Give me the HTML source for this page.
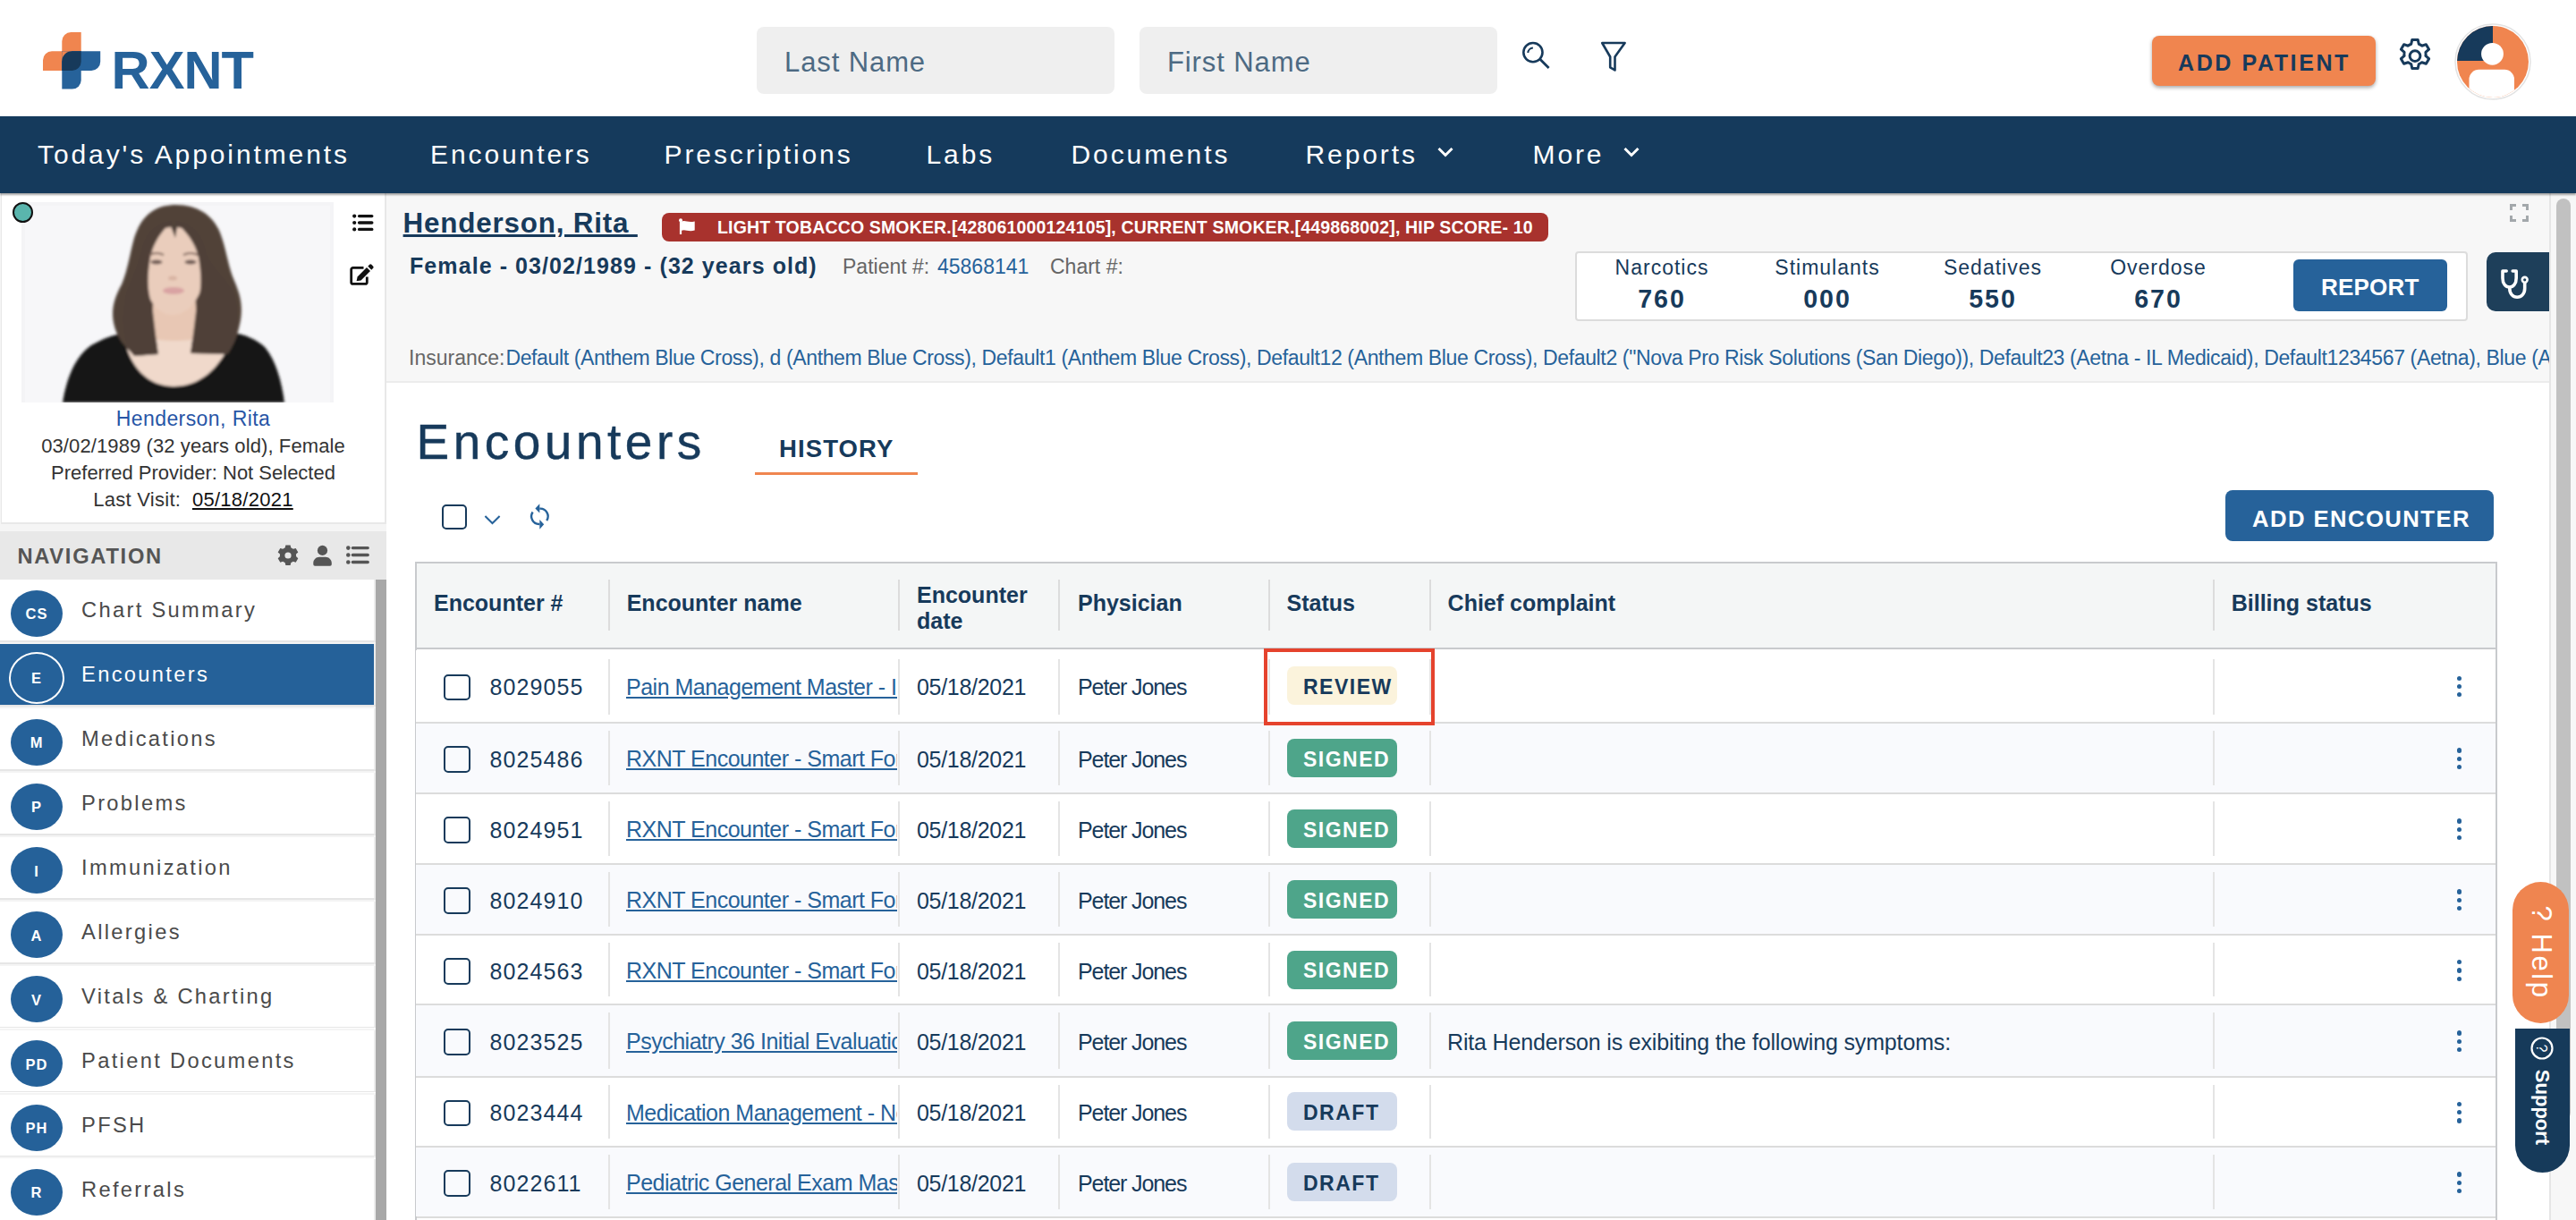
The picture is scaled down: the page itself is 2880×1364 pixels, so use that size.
<!DOCTYPE html><html><head><meta charset="utf-8"><style>
*{margin:0;padding:0;box-sizing:border-box}
html,body{width:2880px;height:1364px;overflow:hidden;background:#fff;font-family:"Liberation Sans",sans-serif}
.t{position:absolute;white-space:nowrap;line-height:1}
.a{position:absolute}
.b{font-weight:bold}
.hd{color:#173a5b}
.bd{color:#173a5b}
</style></head><body>
<div class="a" style="left:0;top:0;width:2880px;height:130px;background:#fff"></div>
<svg class="a" style="left:0;top:0" width="300" height="130" viewBox="0 0 300 130">
<path d="M69.3 46 a10 10 0 0 1 10 -10 h11.4 v43 h-21.4z" fill="#f0854f"/>
<path d="M48 67.3 a10 10 0 0 1 10 -10 h32.7 v21.7 h-42.7z" fill="#f0854f"/>
<path d="M69.3 57.3 h42.9 v11.7 a10 10 0 0 1 -10 10 h-32.9z" fill="#26629a"/>
<path d="M69.3 57.3 h21.4 v32.3 a10 10 0 0 1 -10 10 h-11.4z" fill="#26629a"/>
<rect x="69.3" y="57.3" width="11" height="11" fill="#f0854f"/>
<path d="M80.3 57.3 h10.4 v11.7 a10 10 0 0 1 -10 10 h-11.4 v-10.7 a11 11 0 0 1 11 -11z" fill="#173a5b"/>
</svg>
<div class="t b" style="left:124.5px;top:49.2px;font-size:59.6px;color:#26629a;letter-spacing:-0.9px">RXNT</div>

<div class="a" style="left:846px;top:30px;width:400px;height:75px;background:#efefef;border-radius:8px"></div>
<div class="a" style="left:1274px;top:30px;width:400px;height:75px;background:#efefef;border-radius:8px"></div>
<div class="t " style="left:877px;top:53.7px;font-size:31px;color:#4d6a83;letter-spacing:0.9px">Last Name</div>

<div class="t " style="left:1305px;top:53.7px;font-size:31px;color:#4d6a83;letter-spacing:0.9px">First Name</div>

<svg class="a" style="left:1695px;top:42px" width="45" height="45" viewBox="0 0 45 45">
<circle cx="18.9" cy="16.6" r="10.6" fill="none" stroke="#173a5b" stroke-width="2.6"/>
<path d="M26.8 24.3 L36.6 34.1" stroke="#173a5b" stroke-width="2.8" stroke-linecap="butt"/>
<path d="M13.3 17 A6 6 0 0 1 18.9 11.4" fill="none" stroke="#173a5b" stroke-width="2"/>
</svg>
<svg class="a" style="left:1785px;top:42px" width="40" height="42" viewBox="0 0 40 42">
<path d="M6.2 6 H31.6 L20.5 21.5 V36.4 L15.2 33.3 V21.5 Z" fill="none" stroke="#173a5b" stroke-width="2.6" stroke-linejoin="round"/>
</svg>
<div class="a" style="left:2406px;top:40px;width:250px;height:56px;background:#f0854f;border-radius:8px;box-shadow:0 2px 4px rgba(0,0,0,.35)"></div>
<div class="t b" style="left:2435px;top:57.7px;font-size:25px;color:#173a5b;letter-spacing:2.6px">ADD PATIENT</div>

<svg class="a" style="left:2678px;top:41px" width="44" height="46" viewBox="0 0 44 46">
<g transform="translate(22 21.6) scale(1.07)">
<path d="M-3 -17 h6 l1 4.5 a10 10 0 0 1 3.2 1.85 l4.4 -1.45 l3 5.2 l-3.45 3.05 a10 10 0 0 1 0 3.7 l3.45 3.05 l-3 5.2 l-4.4 -1.45 a10 10 0 0 1 -3.2 1.85 l-1 4.5 h-6 l-1 -4.5 a10 10 0 0 1 -3.2 -1.85 l-4.4 1.45 l-3 -5.2 l3.45 -3.05 a10 10 0 0 1 0 -3.7 l-3.45 -3.05 l3 -5.2 l4.4 1.45 a10 10 0 0 1 3.2 -1.85 z" fill="none" stroke="#173a5b" stroke-width="2.8" stroke-linejoin="round"/>
<circle r="5.5" fill="none" stroke="#173a5b" stroke-width="2.8"/>
</g></svg>
<svg class="a" style="left:2742px;top:24px" width="90" height="90" viewBox="0 0 90 90">
<defs><clipPath id="avc"><circle cx="45" cy="45" r="40"/></clipPath></defs>
<circle cx="45" cy="45" r="42" fill="#fff" stroke="#e2e2e2" stroke-width="1.5"/>
<g clip-path="url(#avc)">
<rect x="0" y="0" width="90" height="90" fill="#f0854f"/>
<path d="M45 0 V38 Q45 44 38 44 H0 V0z" fill="#173a5b"/>
<circle cx="44.5" cy="36.3" r="12.4" fill="#fff"/>
<rect x="18.5" y="53.7" width="50.5" height="40" rx="11" fill="#fff"/>
</g></svg>
<div class="a" style="left:0;top:130px;width:2880px;height:86px;background:#153a5c;box-shadow:0 1.5px 2px rgba(0,0,0,.35);z-index:2"></div>
<div class="t nav" style="left:42.0px;top:157.9px;font-size:30px;color:#fff;z-index:3;letter-spacing:2.9px">Today's Appointments</div>

<div class="t nav" style="left:481.0px;top:157.9px;font-size:30px;color:#fff;z-index:3;letter-spacing:2.9px">Encounters</div>

<div class="t nav" style="left:742.5px;top:157.9px;font-size:30px;color:#fff;z-index:3;letter-spacing:2.9px">Prescriptions</div>

<div class="t nav" style="left:1035.5px;top:157.9px;font-size:30px;color:#fff;z-index:3;letter-spacing:2.9px">Labs</div>

<div class="t nav" style="left:1197.5px;top:157.9px;font-size:30px;color:#fff;z-index:3;letter-spacing:2.9px">Documents</div>

<div class="t nav" style="left:1459.5px;top:157.9px;font-size:30px;color:#fff;z-index:3;letter-spacing:2.9px">Reports</div>

<div class="t nav" style="left:1713.5px;top:157.9px;font-size:30px;color:#fff;z-index:3;letter-spacing:2.9px">More</div>

<svg class="a" style="left:1606px;top:163px;z-index:3" width="20" height="14" viewBox="0 0 20 14"><path d="M2.5 3 L10 10.5 L17.5 3" fill="none" stroke="#fff" stroke-width="3"/></svg>
<svg class="a" style="left:1814px;top:163px;z-index:3" width="20" height="14" viewBox="0 0 20 14"><path d="M2.5 3 L10 10.5 L17.5 3" fill="none" stroke="#fff" stroke-width="3"/></svg>
<div class="a" style="left:0;top:216px;width:432px;height:1148px;background:#f5f5f5"></div>
<div class="a" style="left:1px;top:216px;width:431px;height:370px;background:#fff;border-right:2px solid #e8e8e8;border-bottom:2px solid #e8e8e8;border-left:1px solid #e8e8e8"></div>
<svg class="a" style="left:24px;top:226px" width="349" height="224" viewBox="0 0 349 224">
<defs><filter id="pb" x="-5%" y="-5%" width="110%" height="110%"><feGaussianBlur stdDeviation="1.4"/></filter></defs>
<rect width="349" height="224" fill="#f4f4f6"/>
<rect x="4" y="4" width="341" height="220" fill="#f7f7f9"/>
<g filter="url(#pb)">
<path d="M46 224 C50 198 60 172 78 160 C92 152 104 148 116 146 L236 146 C250 148 262 153 272 162 C284 176 291 200 294 224 Z" fill="#151515"/>
<path d="M114 148 C120 185 142 206 170 206 C198 206 222 188 238 148 C225 138 205 133 170 133 C135 133 125 138 114 148 Z" fill="#f0d9cb"/>
<path d="M173 3 C152 3 135 12 126 40 C121 58 119 75 112 92 C104 106 100 120 103 135 C106 150 114 162 128 172 L153 170 C150 150 148 130 148 100 L194 100 C194 130 192 150 189 169 L230 170 C238 160 242 148 245 132 C248 112 243 100 238 88 C231 72 229 52 222 34 C214 14 196 3 173 3 Z" fill="#514239"/>
<path d="M148 100 L194 100 L197 152 C188 156 156 156 145 152 Z" fill="#e8c7b4"/>
<path d="M137 58 C137 40 150 28 170 28 C190 28 203 40 203 58 L204 86 C200 108 186 126 169 126 C152 126 140 108 138 88 Z" fill="#eacdbc"/>
<path d="M134 56 C138 34 152 22 170 21 C158 30 148 44 144 62 C141 80 140 100 146 114 C148 130 150 150 153 170 L126 172 C114 160 110 130 118 100 C124 86 130 72 134 56 Z" fill="#4f4038"/>
<path d="M206 56 C202 34 188 22 170 21 C182 30 194 44 198 62 C201 80 202 100 196 114 C194 130 192 150 189 169 L230 170 C240 158 244 130 238 104 C232 88 210 72 206 56 Z" fill="#4f4038"/>
<path d="M165 22 C168 28 172 28 175 22 L172 40 Z" fill="#4d4039"/>
<ellipse cx="151" cy="67" rx="6.5" ry="2.6" fill="#6e5a52"/>
<ellipse cx="189" cy="67" rx="6.5" ry="2.6" fill="#6e5a52"/>
<path d="M143 59 Q151 55 159 59" fill="none" stroke="#7a6258" stroke-width="2"/>
<path d="M181 59 Q189 55 197 59" fill="none" stroke="#7a6258" stroke-width="2"/>
<ellipse cx="170" cy="99" rx="12" ry="4" fill="#d9a3a3"/>
<ellipse cx="169" cy="85" rx="5" ry="2.5" fill="#d8b3a2"/>
</g>
</svg>
<div class="a" style="left:14px;top:226px;width:23px;height:23px;border-radius:50%;background:#5ab5ad;border:2px solid #111;z-index:2"></div>
<svg class="a" style="left:392px;top:238px" width="28" height="24" viewBox="0 0 28 24">
<circle cx="4.2" cy="3.6" r="2.1" fill="#111"/><circle cx="4.2" cy="11" r="2.1" fill="#111"/><circle cx="4.2" cy="18.4" r="2.1" fill="#111"/>
<path d="M9.6 3.6 H23.8 M9.6 11 H23.8 M9.6 18.4 H23.8" stroke="#111" stroke-width="3.4" stroke-linecap="round"/>
</svg>
<svg class="a" style="left:389px;top:293px" width="32" height="30" viewBox="0 0 32 30">
<path d="M17.5 6.4 H5.7 a2 2 0 0 0 -2 2 V22.4 a2 2 0 0 0 2 2 H19.3 a2 2 0 0 0 2 -2 V16.5" fill="none" stroke="#111" stroke-width="2.8"/>
<path d="M9.6 21.3 L10.6 16.4 L21 6 L25 10 L14.6 20.4 Z" fill="#111"/>
<path d="M22.3 4.7 L24.2 2.8 a1.5 1.5 0 0 1 2.1 0 L28.2 4.7 a1.5 1.5 0 0 1 0 2.1 L26.3 8.7 Z" fill="#111"/>
</svg>
<div class="t " style="left:216px;top:456.8px;font-size:23px;color:#2755a6;transform:translateX(-50%);letter-spacing:0.43px">Henderson, Rita</div>

<div class="t " style="left:216px;top:488.3px;font-size:22px;color:#333;transform:translateX(-50%);letter-spacing:0.1px">03/02/1989 (32 years old), Female</div>

<div class="t " style="left:216px;top:518.1px;font-size:22px;color:#333;transform:translateX(-50%)">Preferred Provider: Not Selected</div>

<div class="t " style="left:216px;top:547.8px;font-size:22px;color:#333;transform:translateX(-50%);letter-spacing:0.27px">Last Visit:&nbsp; <span style="text-decoration:underline;color:#111">05/18/2021</span></div>

<div class="a" style="left:0;top:594px;width:432px;height:54px;background:#e8e8e8"></div>
<div class="t b" style="left:19.4px;top:610.8px;font-size:23.7px;color:#555;letter-spacing:1.73px">NAVIGATION</div>

<svg class="a" style="left:309px;top:608px" width="26" height="26" viewBox="0 0 26 26"><g transform="translate(13 13)">
<path d="M-2.6 -11.5 h5.2 l0.8 3 a8 8 0 0 1 2.3 1.3 l3 -0.9 l2.6 4.5 l-2.3 2.1 a8 8 0 0 1 0 2.6 l2.3 2.1 l-2.6 4.5 l-3 -0.9 a8 8 0 0 1 -2.3 1.3 l-0.8 3 h-5.2 l-0.8 -3 a8 8 0 0 1 -2.3 -1.3 l-3 0.9 l-2.6 -4.5 l2.3 -2.1 a8 8 0 0 1 0 -2.6 l-2.3 -2.1 l2.6 -4.5 l3 0.9 a8 8 0 0 1 2.3 -1.3 z" fill="#555"/>
<circle r="3.6" fill="#e8e8e8"/></g></svg>
<svg class="a" style="left:349px;top:608px" width="24" height="26" viewBox="0 0 24 26">
<circle cx="11.5" cy="7.4" r="5.6" fill="#555"/><path d="M1.3 23 V21.5 C1.3 17.5 4.5 14.7 8 14.7 H15 C18.5 14.7 21.8 17.5 21.8 21.5 V23 a1.8 1.8 0 0 1 -1.8 1.8 H3.1 a1.8 1.8 0 0 1 -1.8 -1.8 Z" fill="#555"/></svg>
<svg class="a" style="left:386px;top:608px" width="28" height="26" viewBox="0 0 28 26">
<circle cx="3.3" cy="4.6" r="2.3" fill="#555"/><circle cx="3.3" cy="12.5" r="2.3" fill="#555"/><circle cx="3.3" cy="20.5" r="2.3" fill="#555"/>
<path d="M8.4 4.6 H25.2 M8.4 12.5 H25.2 M8.4 20.5 H25.2" stroke="#555" stroke-width="3.4" stroke-linecap="round"/></svg>
<div class="a" style="left:0;top:648px;width:420px;height:716px;background:#fff"></div>
<div class="a" style="left:0;top:716.0px;width:420px;height:1.8px;background:#e6e6e6"></div>
<div class="a" style="left:0;top:717.8px;width:420px;height:2px;background:#f4f4f4"></div>
<div class="a" style="left:418px;top:648.0px;width:2px;height:68px;background:#ececec"></div>
<div class="a" style="left:11.7px;top:659.6px;width:58px;height:52px;border-radius:50%;background:#256199"></div>
<div class="t b" style="left:41px;top:677.8px;font-size:16.5px;color:#fff;transform:translateX(-50%);letter-spacing:1px">CS</div>
<div class="t " style="left:91px;top:670.8px;font-size:23.7px;color:#4a4a4a;letter-spacing:2.33px">Chart Summary</div>

<div class="a" style="left:0;top:720.0px;width:418px;height:68px;background:#256199"></div>
<div class="a" style="left:0;top:788.0px;width:420px;height:1.8px;background:#e6e6e6"></div>
<div class="a" style="left:0;top:789.8px;width:420px;height:2px;background:#f4f4f4"></div>
<div class="a" style="left:418px;top:720.0px;width:2px;height:68px;background:#ececec"></div>
<div class="a" style="left:10px;top:728.6px;width:62px;height:58px;border-radius:50%;border:2px solid #fff"></div>
<div class="t b" style="left:41px;top:749.8px;font-size:16.5px;color:#fff;transform:translateX(-50%);letter-spacing:1px">E</div>
<div class="t " style="left:91px;top:742.8px;font-size:23.7px;color:#fff;letter-spacing:2.33px">Encounters</div>

<div class="a" style="left:0;top:859.9px;width:420px;height:1.8px;background:#e6e6e6"></div>
<div class="a" style="left:0;top:861.7px;width:420px;height:2px;background:#f4f4f4"></div>
<div class="a" style="left:418px;top:791.9px;width:2px;height:68px;background:#ececec"></div>
<div class="a" style="left:11.7px;top:803.5px;width:58px;height:52px;border-radius:50%;background:#256199"></div>
<div class="t b" style="left:41px;top:821.7px;font-size:16.5px;color:#fff;transform:translateX(-50%);letter-spacing:1px">M</div>
<div class="t " style="left:91px;top:814.8px;font-size:23.7px;color:#4a4a4a;letter-spacing:2.33px">Medications</div>

<div class="a" style="left:0;top:931.9px;width:420px;height:1.8px;background:#e6e6e6"></div>
<div class="a" style="left:0;top:933.6px;width:420px;height:2px;background:#f4f4f4"></div>
<div class="a" style="left:418px;top:863.9px;width:2px;height:68px;background:#ececec"></div>
<div class="a" style="left:11.7px;top:875.5px;width:58px;height:52px;border-radius:50%;background:#256199"></div>
<div class="t b" style="left:41px;top:893.7px;font-size:16.5px;color:#fff;transform:translateX(-50%);letter-spacing:1px">P</div>
<div class="t " style="left:91px;top:886.8px;font-size:23.7px;color:#4a4a4a;letter-spacing:2.33px">Problems</div>

<div class="a" style="left:0;top:1003.8px;width:420px;height:1.8px;background:#e6e6e6"></div>
<div class="a" style="left:0;top:1005.6px;width:420px;height:2px;background:#f4f4f4"></div>
<div class="a" style="left:418px;top:935.8px;width:2px;height:68px;background:#ececec"></div>
<div class="a" style="left:11.7px;top:947.4px;width:58px;height:52px;border-radius:50%;background:#256199"></div>
<div class="t b" style="left:41px;top:965.6px;font-size:16.5px;color:#fff;transform:translateX(-50%);letter-spacing:1px">I</div>
<div class="t " style="left:91px;top:958.8px;font-size:23.7px;color:#4a4a4a;letter-spacing:2.33px">Immunization</div>

<div class="a" style="left:0;top:1075.8px;width:420px;height:1.8px;background:#e6e6e6"></div>
<div class="a" style="left:0;top:1077.5px;width:420px;height:2px;background:#f4f4f4"></div>
<div class="a" style="left:418px;top:1007.8px;width:2px;height:68px;background:#ececec"></div>
<div class="a" style="left:11.7px;top:1019.3px;width:58px;height:52px;border-radius:50%;background:#256199"></div>
<div class="t b" style="left:41px;top:1037.6px;font-size:16.5px;color:#fff;transform:translateX(-50%);letter-spacing:1px">A</div>
<div class="t " style="left:91px;top:1030.8px;font-size:23.7px;color:#4a4a4a;letter-spacing:2.33px">Allergies</div>

<div class="a" style="left:0;top:1147.7px;width:420px;height:1.8px;background:#e6e6e6"></div>
<div class="a" style="left:0;top:1149.5px;width:420px;height:2px;background:#f4f4f4"></div>
<div class="a" style="left:418px;top:1079.7px;width:2px;height:68px;background:#ececec"></div>
<div class="a" style="left:11.7px;top:1091.3px;width:58px;height:52px;border-radius:50%;background:#256199"></div>
<div class="t b" style="left:41px;top:1109.5px;font-size:16.5px;color:#fff;transform:translateX(-50%);letter-spacing:1px">V</div>
<div class="t " style="left:91px;top:1102.8px;font-size:23.7px;color:#4a4a4a;letter-spacing:2.33px">Vitals &amp; Charting</div>

<div class="a" style="left:0;top:1219.7px;width:420px;height:1.8px;background:#e6e6e6"></div>
<div class="a" style="left:0;top:1221.5px;width:420px;height:2px;background:#f4f4f4"></div>
<div class="a" style="left:418px;top:1151.7px;width:2px;height:68px;background:#ececec"></div>
<div class="a" style="left:11.7px;top:1163.2px;width:58px;height:52px;border-radius:50%;background:#256199"></div>
<div class="t b" style="left:41px;top:1181.5px;font-size:16.5px;color:#fff;transform:translateX(-50%);letter-spacing:1px">PD</div>
<div class="t " style="left:91px;top:1174.8px;font-size:23.7px;color:#4a4a4a;letter-spacing:2.33px">Patient Documents</div>

<div class="a" style="left:0;top:1291.6px;width:420px;height:1.8px;background:#e6e6e6"></div>
<div class="a" style="left:0;top:1293.4px;width:420px;height:2px;background:#f4f4f4"></div>
<div class="a" style="left:418px;top:1223.6px;width:2px;height:68px;background:#ececec"></div>
<div class="a" style="left:11.7px;top:1235.2px;width:58px;height:52px;border-radius:50%;background:#256199"></div>
<div class="t b" style="left:41px;top:1253.4px;font-size:16.5px;color:#fff;transform:translateX(-50%);letter-spacing:1px">PH</div>
<div class="t " style="left:91px;top:1246.8px;font-size:23.7px;color:#4a4a4a;letter-spacing:2.33px">PFSH</div>

<div class="a" style="left:0;top:1363.6px;width:420px;height:1.8px;background:#e6e6e6"></div>
<div class="a" style="left:0;top:1365.4px;width:420px;height:2px;background:#f4f4f4"></div>
<div class="a" style="left:418px;top:1295.6px;width:2px;height:68px;background:#ececec"></div>
<div class="a" style="left:11.7px;top:1307.2px;width:58px;height:52px;border-radius:50%;background:#256199"></div>
<div class="t b" style="left:41px;top:1325.4px;font-size:16.5px;color:#fff;transform:translateX(-50%);letter-spacing:1px">R</div>
<div class="t " style="left:91px;top:1318.8px;font-size:23.7px;color:#4a4a4a;letter-spacing:2.33px">Referrals</div>

<div class="a" style="left:420px;top:648px;width:12px;height:716px;background:#a8a8a8"></div>
<div class="a" style="left:432px;top:216px;width:2419px;height:212px;background:#f7f7f7;border-bottom:2px solid #ececec"></div>
<div class="t b" style="left:450.6px;top:234.3px;font-size:31.4px;color:#173a5b;text-decoration:underline;letter-spacing:0.8px">Henderson, Rita&nbsp;</div>

<div class="a" style="left:740px;top:238px;width:991px;height:32px;background:#a8322d;border-radius:8px"></div>
<svg class="a" style="left:757px;top:244px" width="22" height="20" viewBox="0 0 22 20"><rect x="2.9" y="2.5" width="2.2" height="15.5" fill="#fff"/><circle cx="4" cy="2.3" r="2" fill="#fff"/><path d="M5 3.6 C9 1.6 12 5.4 19.7 3.4 V13.6 C12 15.6 9 11.8 5 13.8 Z" fill="#fff"/></svg>
<div class="t b" style="left:802px;top:245.4px;font-size:19.5px;color:#fff;letter-spacing:0.16px">LIGHT TOBACCO SMOKER.[428061000124105], CURRENT SMOKER.[449868002], HIP SCORE- 10</div>

<div class="t b" style="left:458px;top:284.7px;font-size:25px;color:#173a5b;letter-spacing:1.08px">Female - 03/02/1989 - (32 years old)</div>

<div class="t " style="left:942px;top:287.1px;font-size:23px;color:#666">Patient #:</div>

<div class="t " style="left:1048px;top:287.1px;font-size:23px;color:#26629a">45868141</div>

<div class="t " style="left:1174px;top:287.1px;font-size:23px;color:#666">Chart #:</div>

<div class="a" style="left:2806px;top:228px;width:21px;height:20px"><div class="a" style="left:0;top:0;width:7px;height:7px;border-left:3px solid #a3a8ab;border-top:3px solid #a3a8ab"></div><div class="a" style="right:0;top:0;width:7px;height:7px;border-right:3px solid #a3a8ab;border-top:3px solid #a3a8ab"></div><div class="a" style="left:0;bottom:0;width:7px;height:7px;border-left:3px solid #a3a8ab;border-bottom:3px solid #a3a8ab"></div><div class="a" style="right:0;bottom:0;width:7px;height:7px;border-right:3px solid #a3a8ab;border-bottom:3px solid #a3a8ab"></div></div>
<div class="a" style="left:1761px;top:280.5px;width:998px;height:78.5px;background:#fff;border:2px solid #dcdcdc;border-radius:4px"></div>
<div class="t " style="left:1858px;top:288.0px;font-size:23px;color:#173a5b;transform:translateX(-50%);letter-spacing:1px">Narcotics</div>

<div class="t b" style="left:1858px;top:319.7px;font-size:28.6px;color:#173a5b;transform:translateX(-50%);letter-spacing:2px">760</div>

<div class="t " style="left:2043px;top:288.0px;font-size:23px;color:#173a5b;transform:translateX(-50%);letter-spacing:1px">Stimulants</div>

<div class="t b" style="left:2043px;top:319.7px;font-size:28.6px;color:#173a5b;transform:translateX(-50%);letter-spacing:2px">000</div>

<div class="t " style="left:2228px;top:288.0px;font-size:23px;color:#173a5b;transform:translateX(-50%);letter-spacing:1px">Sedatives</div>

<div class="t b" style="left:2228px;top:319.7px;font-size:28.6px;color:#173a5b;transform:translateX(-50%);letter-spacing:2px">550</div>

<div class="t " style="left:2413px;top:288.0px;font-size:23px;color:#173a5b;transform:translateX(-50%);letter-spacing:1px">Overdose</div>

<div class="t b" style="left:2413px;top:319.7px;font-size:28.6px;color:#173a5b;transform:translateX(-50%);letter-spacing:2px">670</div>

<div class="a" style="left:2564px;top:290px;width:172px;height:58px;background:#26629a;border-radius:6px"></div>
<div class="t b" style="left:2595px;top:308.4px;font-size:26px;color:#fff;letter-spacing:0.2px">REPORT</div>

<div class="a" style="left:2780px;top:282px;width:70px;height:66px;background:#1e3f5a;border-radius:10px 0 0 10px"></div>
<svg class="a" style="left:2793px;top:298px" width="40" height="40" viewBox="0 0 40 40">
<path d="M9.2 5 H5 V13 C5 19.5 8.5 23 12.6 23 C16.7 23 20.2 19.5 20.2 13 V5 H16.2" fill="none" stroke="#fff" stroke-width="3.6" stroke-linejoin="round" stroke-linecap="round"/>
<path d="M12.8 23 V24.5 C12.8 30.5 16.5 34.2 21.2 34.2 C25.9 34.2 29.7 30.5 29.7 24.5 V18" fill="none" stroke="#fff" stroke-width="3.6"/>
<circle cx="29.7" cy="14.8" r="2.9" fill="none" stroke="#fff" stroke-width="2.6"/></svg>
<div class="t" style="left:457px;top:387px;font-size:23px;width:2393px;overflow:hidden;color:#26629a;line-height:1.2;letter-spacing:-0.36px"><span style="color:#666;letter-spacing:0">Insurance:</span><span style="margin-left:1px"></span>Default (Anthem Blue Cross), d (Anthem Blue Cross), Default1 (Anthem Blue Cross), Default12 (Anthem Blue Cross), Default2 (&quot;Nova Pro Risk Solutions (San Diego)), Default23 (Aetna - IL Medicaid), Default1234567 (Aetna), Blue (Aetna)</div>
<div class="a" style="left:432px;top:429px;width:2419px;height:935px;background:#fff"></div>
<div class="t " style="left:465.5px;top:467.1px;font-size:55px;color:#173a5b;letter-spacing:4.5px;-webkit-text-stroke:0.45px #173a5b">Encounters</div>

<div class="t b" style="left:871px;top:488.3px;font-size:27.5px;color:#173a5b;letter-spacing:1.1px">HISTORY</div>

<div class="a" style="left:844px;top:527.5px;width:182px;height:3px;background:#f0854f"></div>
<div class="a" style="left:494px;top:564px;width:28px;height:28px;border:2.4px solid #173a5b;border-radius:5px"></div>
<svg class="a" style="left:540px;top:572px" width="22" height="18" viewBox="0 0 22 18"><path d="M2.4 5 L10.5 13 L18.6 5" fill="none" stroke="#26629a" stroke-width="2"/></svg>
<svg class="a" style="left:590px;top:562px" width="28" height="32" viewBox="0 0 28 32">
<path d="M5.6 10.5 A8.6 8.6 0 0 0 13.3 23.9" fill="none" stroke="#26629a" stroke-width="2.4"/>
<path d="M21.2 20 A8.6 8.6 0 0 0 13.3 6.7" fill="none" stroke="#26629a" stroke-width="2.4"/>
<path d="M13.3 19 L18.2 24.3 L13.3 29.8 Z" fill="#26629a"/><path d="M13.3 1.2 L8.4 6.5 L13.3 11.5 Z" fill="#26629a"/></svg>
<div class="a" style="left:2488px;top:548px;width:300px;height:57px;background:#26629a;border-radius:8px"></div>
<div class="t b" style="left:2518px;top:568.1px;font-size:25.7px;color:#fff;letter-spacing:1.42px">ADD ENCOUNTER</div>

<div class="a" style="left:464px;top:628px;width:2328px;height:800px;border:2px solid #c8cacd;background:#fff"></div>
<div class="a" style="left:466px;top:630px;width:2324px;height:96px;background:#f4f6f6;border-bottom:2px solid #c8cacd"></div>
<div class="a" style="left:680px;top:648px;width:2px;height:57px;background:#dcdcdc"></div>
<div class="a" style="left:1003.5px;top:648px;width:2px;height:57px;background:#dcdcdc"></div>
<div class="a" style="left:1183px;top:648px;width:2px;height:57px;background:#dcdcdc"></div>
<div class="a" style="left:1417.5px;top:648px;width:2px;height:57px;background:#dcdcdc"></div>
<div class="a" style="left:1598px;top:648px;width:2px;height:57px;background:#dcdcdc"></div>
<div class="a" style="left:2474px;top:648px;width:2px;height:57px;background:#dcdcdc"></div>
<div class="t b hd" style="left:485px;top:662.2px;font-size:25px;">Encounter #</div>

<div class="t b hd" style="left:700.7px;top:662.2px;font-size:25px;">Encounter name</div>

<div class="t b hd" style="left:1025px;top:652.7px;font-size:25px;">Encounter</div>

<div class="t b hd" style="left:1025px;top:682.3px;font-size:25px;">date</div>

<div class="t b hd" style="left:1205px;top:662.2px;font-size:25px;">Physician</div>

<div class="t b hd" style="left:1438.5px;top:662.2px;font-size:25px;">Status</div>

<div class="t b hd" style="left:1618.6px;top:662.2px;font-size:25px;">Chief complaint</div>

<div class="t b hd" style="left:2494.7px;top:662.2px;font-size:25px;">Billing status</div>

<div class="a" style="left:465px;top:726.5px;width:2325px;height:80.0px;background:#fff"></div>
<div class="a" style="left:680px;top:736.5px;width:2px;height:62.0px;background:#e4e4e4"></div>
<div class="a" style="left:1003.5px;top:736.5px;width:2px;height:62.0px;background:#e4e4e4"></div>
<div class="a" style="left:1183px;top:736.5px;width:2px;height:62.0px;background:#e4e4e4"></div>
<div class="a" style="left:1417.5px;top:736.5px;width:2px;height:62.0px;background:#e4e4e4"></div>
<div class="a" style="left:1598px;top:736.5px;width:2px;height:62.0px;background:#e4e4e4"></div>
<div class="a" style="left:2474px;top:736.5px;width:2px;height:62.0px;background:#e4e4e4"></div>
<div class="a" style="left:496px;top:753.5px;width:29.5px;height:29.5px;border:2.4px solid #173a5b;border-radius:5px"></div>
<div class="t bd" style="left:547.5px;top:756.0px;font-size:25px;letter-spacing:1.08px">8029055</div>

<div class="t" style="left:700px;top:752.6px;font-size:25px;width:303px;overflow:hidden;color:#26629a;text-decoration:underline;text-underline-offset:2px;letter-spacing:-0.5px;line-height:1.2">Pain Management Master - Initial Visit</div>
<div class="t bd" style="left:1025px;top:756.0px;font-size:25px;letter-spacing:-0.3px">05/18/2021</div>

<div class="t bd" style="left:1205px;top:756.0px;font-size:25px;letter-spacing:-1.1px">Peter Jones</div>

<div class="a" style="left:1438.5px;top:745.0px;width:123px;height:43px;background:#fbf3dc;border-radius:8px"></div>
<div class="t b" style="left:1457px;top:756.7px;font-size:23px;color:#173a5b;letter-spacing:1.5px">REVIEW</div>

<div class="a" style="left:2745.5px;top:755.0px;width:7px;height:24px"><div class="a" style="left:1px;top:0.5px;width:5.4px;height:5.4px;border-radius:50%;background:#26629a"></div><div class="a" style="left:1px;top:9.8px;width:5.4px;height:5.4px;border-radius:50%;background:#26629a"></div><div class="a" style="left:1px;top:19.1px;width:5.4px;height:5.4px;border-radius:50%;background:#26629a"></div></div>
<div class="a" style="left:465px;top:806.5px;width:2325px;height:79.5px;background:#f9fafd;border-top:2px solid #dcdcdc"></div>
<div class="a" style="left:680px;top:816.5px;width:2px;height:61.5px;background:#e4e4e4"></div>
<div class="a" style="left:1003.5px;top:816.5px;width:2px;height:61.5px;background:#e4e4e4"></div>
<div class="a" style="left:1183px;top:816.5px;width:2px;height:61.5px;background:#e4e4e4"></div>
<div class="a" style="left:1417.5px;top:816.5px;width:2px;height:61.5px;background:#e4e4e4"></div>
<div class="a" style="left:1598px;top:816.5px;width:2px;height:61.5px;background:#e4e4e4"></div>
<div class="a" style="left:2474px;top:816.5px;width:2px;height:61.5px;background:#e4e4e4"></div>
<div class="a" style="left:496px;top:834.2px;width:29.5px;height:29.5px;border:2.4px solid #173a5b;border-radius:5px"></div>
<div class="t bd" style="left:547.5px;top:836.8px;font-size:25px;letter-spacing:1.08px">8025486</div>

<div class="t" style="left:700px;top:833.4px;font-size:25px;width:303px;overflow:hidden;color:#26629a;text-decoration:underline;text-underline-offset:2px;letter-spacing:-0.5px;line-height:1.2">RXNT Encounter - Smart Form</div>
<div class="t bd" style="left:1025px;top:836.8px;font-size:25px;letter-spacing:-0.3px">05/18/2021</div>

<div class="t bd" style="left:1205px;top:836.8px;font-size:25px;letter-spacing:-1.1px">Peter Jones</div>

<div class="a" style="left:1438.5px;top:825.8px;width:123px;height:43px;background:#4ea58a;border-radius:8px"></div>
<div class="t b" style="left:1457px;top:837.5px;font-size:23px;color:#fff;letter-spacing:1.5px">SIGNED</div>

<div class="a" style="left:2745.5px;top:835.8px;width:7px;height:24px"><div class="a" style="left:1px;top:0.5px;width:5.4px;height:5.4px;border-radius:50%;background:#26629a"></div><div class="a" style="left:1px;top:9.8px;width:5.4px;height:5.4px;border-radius:50%;background:#26629a"></div><div class="a" style="left:1px;top:19.1px;width:5.4px;height:5.4px;border-radius:50%;background:#26629a"></div></div>
<div class="a" style="left:465px;top:886.0px;width:2325px;height:78.5px;background:#fff;border-top:2px solid #dcdcdc"></div>
<div class="a" style="left:680px;top:896.0px;width:2px;height:60.5px;background:#e4e4e4"></div>
<div class="a" style="left:1003.5px;top:896.0px;width:2px;height:60.5px;background:#e4e4e4"></div>
<div class="a" style="left:1183px;top:896.0px;width:2px;height:60.5px;background:#e4e4e4"></div>
<div class="a" style="left:1417.5px;top:896.0px;width:2px;height:60.5px;background:#e4e4e4"></div>
<div class="a" style="left:1598px;top:896.0px;width:2px;height:60.5px;background:#e4e4e4"></div>
<div class="a" style="left:2474px;top:896.0px;width:2px;height:60.5px;background:#e4e4e4"></div>
<div class="a" style="left:496px;top:913.2px;width:29.5px;height:29.5px;border:2.4px solid #173a5b;border-radius:5px"></div>
<div class="t bd" style="left:547.5px;top:915.8px;font-size:25px;letter-spacing:1.08px">8024951</div>

<div class="t" style="left:700px;top:912.4px;font-size:25px;width:303px;overflow:hidden;color:#26629a;text-decoration:underline;text-underline-offset:2px;letter-spacing:-0.5px;line-height:1.2">RXNT Encounter - Smart Form</div>
<div class="t bd" style="left:1025px;top:915.8px;font-size:25px;letter-spacing:-0.3px">05/18/2021</div>

<div class="t bd" style="left:1205px;top:915.8px;font-size:25px;letter-spacing:-1.1px">Peter Jones</div>

<div class="a" style="left:1438.5px;top:904.8px;width:123px;height:43px;background:#4ea58a;border-radius:8px"></div>
<div class="t b" style="left:1457px;top:916.5px;font-size:23px;color:#fff;letter-spacing:1.5px">SIGNED</div>

<div class="a" style="left:2745.5px;top:914.8px;width:7px;height:24px"><div class="a" style="left:1px;top:0.5px;width:5.4px;height:5.4px;border-radius:50%;background:#26629a"></div><div class="a" style="left:1px;top:9.8px;width:5.4px;height:5.4px;border-radius:50%;background:#26629a"></div><div class="a" style="left:1px;top:19.1px;width:5.4px;height:5.4px;border-radius:50%;background:#26629a"></div></div>
<div class="a" style="left:465px;top:964.5px;width:2325px;height:79.5px;background:#f9fafd;border-top:2px solid #dcdcdc"></div>
<div class="a" style="left:680px;top:974.5px;width:2px;height:61.5px;background:#e4e4e4"></div>
<div class="a" style="left:1003.5px;top:974.5px;width:2px;height:61.5px;background:#e4e4e4"></div>
<div class="a" style="left:1183px;top:974.5px;width:2px;height:61.5px;background:#e4e4e4"></div>
<div class="a" style="left:1417.5px;top:974.5px;width:2px;height:61.5px;background:#e4e4e4"></div>
<div class="a" style="left:1598px;top:974.5px;width:2px;height:61.5px;background:#e4e4e4"></div>
<div class="a" style="left:2474px;top:974.5px;width:2px;height:61.5px;background:#e4e4e4"></div>
<div class="a" style="left:496px;top:992.2px;width:29.5px;height:29.5px;border:2.4px solid #173a5b;border-radius:5px"></div>
<div class="t bd" style="left:547.5px;top:994.8px;font-size:25px;letter-spacing:1.08px">8024910</div>

<div class="t" style="left:700px;top:991.4px;font-size:25px;width:303px;overflow:hidden;color:#26629a;text-decoration:underline;text-underline-offset:2px;letter-spacing:-0.5px;line-height:1.2">RXNT Encounter - Smart Form</div>
<div class="t bd" style="left:1025px;top:994.8px;font-size:25px;letter-spacing:-0.3px">05/18/2021</div>

<div class="t bd" style="left:1205px;top:994.8px;font-size:25px;letter-spacing:-1.1px">Peter Jones</div>

<div class="a" style="left:1438.5px;top:983.8px;width:123px;height:43px;background:#4ea58a;border-radius:8px"></div>
<div class="t b" style="left:1457px;top:995.5px;font-size:23px;color:#fff;letter-spacing:1.5px">SIGNED</div>

<div class="a" style="left:2745.5px;top:993.8px;width:7px;height:24px"><div class="a" style="left:1px;top:0.5px;width:5.4px;height:5.4px;border-radius:50%;background:#26629a"></div><div class="a" style="left:1px;top:9.8px;width:5.4px;height:5.4px;border-radius:50%;background:#26629a"></div><div class="a" style="left:1px;top:19.1px;width:5.4px;height:5.4px;border-radius:50%;background:#26629a"></div></div>
<div class="a" style="left:465px;top:1044.0px;width:2325px;height:78.0px;background:#fff;border-top:2px solid #dcdcdc"></div>
<div class="a" style="left:680px;top:1054.0px;width:2px;height:60.0px;background:#e4e4e4"></div>
<div class="a" style="left:1003.5px;top:1054.0px;width:2px;height:60.0px;background:#e4e4e4"></div>
<div class="a" style="left:1183px;top:1054.0px;width:2px;height:60.0px;background:#e4e4e4"></div>
<div class="a" style="left:1417.5px;top:1054.0px;width:2px;height:60.0px;background:#e4e4e4"></div>
<div class="a" style="left:1598px;top:1054.0px;width:2px;height:60.0px;background:#e4e4e4"></div>
<div class="a" style="left:2474px;top:1054.0px;width:2px;height:60.0px;background:#e4e4e4"></div>
<div class="a" style="left:496px;top:1071.0px;width:29.5px;height:29.5px;border:2.4px solid #173a5b;border-radius:5px"></div>
<div class="t bd" style="left:547.5px;top:1073.5px;font-size:25px;letter-spacing:1.08px">8024563</div>

<div class="t" style="left:700px;top:1070.1px;font-size:25px;width:303px;overflow:hidden;color:#26629a;text-decoration:underline;text-underline-offset:2px;letter-spacing:-0.5px;line-height:1.2">RXNT Encounter - Smart Form</div>
<div class="t bd" style="left:1025px;top:1073.5px;font-size:25px;letter-spacing:-0.3px">05/18/2021</div>

<div class="t bd" style="left:1205px;top:1073.5px;font-size:25px;letter-spacing:-1.1px">Peter Jones</div>

<div class="a" style="left:1438.5px;top:1062.5px;width:123px;height:43px;background:#4ea58a;border-radius:8px"></div>
<div class="t b" style="left:1457px;top:1074.2px;font-size:23px;color:#fff;letter-spacing:1.5px">SIGNED</div>

<div class="a" style="left:2745.5px;top:1072.5px;width:7px;height:24px"><div class="a" style="left:1px;top:0.5px;width:5.4px;height:5.4px;border-radius:50%;background:#26629a"></div><div class="a" style="left:1px;top:9.8px;width:5.4px;height:5.4px;border-radius:50%;background:#26629a"></div><div class="a" style="left:1px;top:19.1px;width:5.4px;height:5.4px;border-radius:50%;background:#26629a"></div></div>
<div class="a" style="left:465px;top:1122.0px;width:2325px;height:80.5px;background:#f9fafd;border-top:2px solid #dcdcdc"></div>
<div class="a" style="left:680px;top:1132.0px;width:2px;height:62.5px;background:#e4e4e4"></div>
<div class="a" style="left:1003.5px;top:1132.0px;width:2px;height:62.5px;background:#e4e4e4"></div>
<div class="a" style="left:1183px;top:1132.0px;width:2px;height:62.5px;background:#e4e4e4"></div>
<div class="a" style="left:1417.5px;top:1132.0px;width:2px;height:62.5px;background:#e4e4e4"></div>
<div class="a" style="left:1598px;top:1132.0px;width:2px;height:62.5px;background:#e4e4e4"></div>
<div class="a" style="left:2474px;top:1132.0px;width:2px;height:62.5px;background:#e4e4e4"></div>
<div class="a" style="left:496px;top:1150.2px;width:29.5px;height:29.5px;border:2.4px solid #173a5b;border-radius:5px"></div>
<div class="t bd" style="left:547.5px;top:1152.8px;font-size:25px;letter-spacing:1.08px">8023525</div>

<div class="t" style="left:700px;top:1149.4px;font-size:25px;width:303px;overflow:hidden;color:#26629a;text-decoration:underline;text-underline-offset:2px;letter-spacing:-0.5px;line-height:1.2">Psychiatry 36 Initial Evaluation</div>
<div class="t bd" style="left:1025px;top:1152.8px;font-size:25px;letter-spacing:-0.3px">05/18/2021</div>

<div class="t bd" style="left:1205px;top:1152.8px;font-size:25px;letter-spacing:-1.1px">Peter Jones</div>

<div class="a" style="left:1438.5px;top:1141.8px;width:123px;height:43px;background:#4ea58a;border-radius:8px"></div>
<div class="t b" style="left:1457px;top:1153.5px;font-size:23px;color:#fff;letter-spacing:1.5px">SIGNED</div>

<div class="t bd" style="left:1618px;top:1152.8px;font-size:25px;letter-spacing:-0.16px">Rita Henderson is exibiting the following symptoms:</div>

<div class="a" style="left:2745.5px;top:1151.8px;width:7px;height:24px"><div class="a" style="left:1px;top:0.5px;width:5.4px;height:5.4px;border-radius:50%;background:#26629a"></div><div class="a" style="left:1px;top:9.8px;width:5.4px;height:5.4px;border-radius:50%;background:#26629a"></div><div class="a" style="left:1px;top:19.1px;width:5.4px;height:5.4px;border-radius:50%;background:#26629a"></div></div>
<div class="a" style="left:465px;top:1202.5px;width:2325px;height:78.5px;background:#fff;border-top:2px solid #dcdcdc"></div>
<div class="a" style="left:680px;top:1212.5px;width:2px;height:60.5px;background:#e4e4e4"></div>
<div class="a" style="left:1003.5px;top:1212.5px;width:2px;height:60.5px;background:#e4e4e4"></div>
<div class="a" style="left:1183px;top:1212.5px;width:2px;height:60.5px;background:#e4e4e4"></div>
<div class="a" style="left:1417.5px;top:1212.5px;width:2px;height:60.5px;background:#e4e4e4"></div>
<div class="a" style="left:1598px;top:1212.5px;width:2px;height:60.5px;background:#e4e4e4"></div>
<div class="a" style="left:2474px;top:1212.5px;width:2px;height:60.5px;background:#e4e4e4"></div>
<div class="a" style="left:496px;top:1229.8px;width:29.5px;height:29.5px;border:2.4px solid #173a5b;border-radius:5px"></div>
<div class="t bd" style="left:547.5px;top:1232.3px;font-size:25px;letter-spacing:1.08px">8023444</div>

<div class="t" style="left:700px;top:1228.9px;font-size:25px;width:303px;overflow:hidden;color:#26629a;text-decoration:underline;text-underline-offset:2px;letter-spacing:-0.5px;line-height:1.2">Medication Management - New</div>
<div class="t bd" style="left:1025px;top:1232.3px;font-size:25px;letter-spacing:-0.3px">05/18/2021</div>

<div class="t bd" style="left:1205px;top:1232.3px;font-size:25px;letter-spacing:-1.1px">Peter Jones</div>

<div class="a" style="left:1438.5px;top:1221.2px;width:123px;height:43px;background:#d3dcec;border-radius:8px"></div>
<div class="t b" style="left:1457px;top:1233.0px;font-size:23px;color:#173a5b;letter-spacing:1.5px">DRAFT</div>

<div class="a" style="left:2745.5px;top:1231.2px;width:7px;height:24px"><div class="a" style="left:1px;top:0.5px;width:5.4px;height:5.4px;border-radius:50%;background:#26629a"></div><div class="a" style="left:1px;top:9.8px;width:5.4px;height:5.4px;border-radius:50%;background:#26629a"></div><div class="a" style="left:1px;top:19.1px;width:5.4px;height:5.4px;border-radius:50%;background:#26629a"></div></div>
<div class="a" style="left:465px;top:1281.0px;width:2325px;height:78.5px;background:#f9fafd;border-top:2px solid #dcdcdc"></div>
<div class="a" style="left:680px;top:1291.0px;width:2px;height:60.5px;background:#e4e4e4"></div>
<div class="a" style="left:1003.5px;top:1291.0px;width:2px;height:60.5px;background:#e4e4e4"></div>
<div class="a" style="left:1183px;top:1291.0px;width:2px;height:60.5px;background:#e4e4e4"></div>
<div class="a" style="left:1417.5px;top:1291.0px;width:2px;height:60.5px;background:#e4e4e4"></div>
<div class="a" style="left:1598px;top:1291.0px;width:2px;height:60.5px;background:#e4e4e4"></div>
<div class="a" style="left:2474px;top:1291.0px;width:2px;height:60.5px;background:#e4e4e4"></div>
<div class="a" style="left:496px;top:1308.2px;width:29.5px;height:29.5px;border:2.4px solid #173a5b;border-radius:5px"></div>
<div class="t bd" style="left:547.5px;top:1310.8px;font-size:25px;letter-spacing:1.08px">8022611</div>

<div class="t" style="left:700px;top:1307.4px;font-size:25px;width:303px;overflow:hidden;color:#26629a;text-decoration:underline;text-underline-offset:2px;letter-spacing:-0.5px;line-height:1.2">Pediatric General Exam Master</div>
<div class="t bd" style="left:1025px;top:1310.8px;font-size:25px;letter-spacing:-0.3px">05/18/2021</div>

<div class="t bd" style="left:1205px;top:1310.8px;font-size:25px;letter-spacing:-1.1px">Peter Jones</div>

<div class="a" style="left:1438.5px;top:1299.8px;width:123px;height:43px;background:#d3dcec;border-radius:8px"></div>
<div class="t b" style="left:1457px;top:1311.5px;font-size:23px;color:#173a5b;letter-spacing:1.5px">DRAFT</div>

<div class="a" style="left:2745.5px;top:1309.8px;width:7px;height:24px"><div class="a" style="left:1px;top:0.5px;width:5.4px;height:5.4px;border-radius:50%;background:#26629a"></div><div class="a" style="left:1px;top:9.8px;width:5.4px;height:5.4px;border-radius:50%;background:#26629a"></div><div class="a" style="left:1px;top:19.1px;width:5.4px;height:5.4px;border-radius:50%;background:#26629a"></div></div>
<div class="a" style="left:466px;top:1359.5px;width:2324px;height:10px;background:#fff;border-top:2px solid #dcdcdc"></div>
<div class="a" style="left:1413px;top:724.5px;width:191px;height:86px;border:4.5px solid #e5432d"></div>
<div class="a" style="left:2850px;top:216px;width:30px;height:1148px;background:#f7f7f7;border-left:2px solid #e6e6e6"></div>
<div class="a" style="left:2858px;top:222px;width:16px;height:1030px;background:#c1c1c1;border-radius:8px"></div>
<div class="a" style="left:2809px;top:986px;width:63px;height:158px;background:#ef8550;border-radius:32px"></div>
<div class="t" style="left:2840.5px;top:1065px;font-size:31px;color:#fff;transform:translate(-50%,-50%) rotate(90deg);letter-spacing:2.6px">? Help</div>
<div class="a" style="left:2811.5px;top:1150px;width:61.5px;height:161px;background:#163a5a;border-radius:0 0 31px 31px"></div>
<svg class="a" style="left:2828px;top:1158px" width="28" height="28" viewBox="0 0 28 28"><circle cx="14" cy="14" r="11.5" fill="none" stroke="#fff" stroke-width="2.2"/><text x="14" y="20" font-size="16" font-family="Liberation Sans" fill="#fff" text-anchor="middle" transform="rotate(90 14 14)">?</text></svg>
<div class="t b" style="left:2842px;top:1238px;font-size:22px;color:#fff;transform:translate(-50%,-50%) rotate(90deg)">Support</div>
</body></html>
